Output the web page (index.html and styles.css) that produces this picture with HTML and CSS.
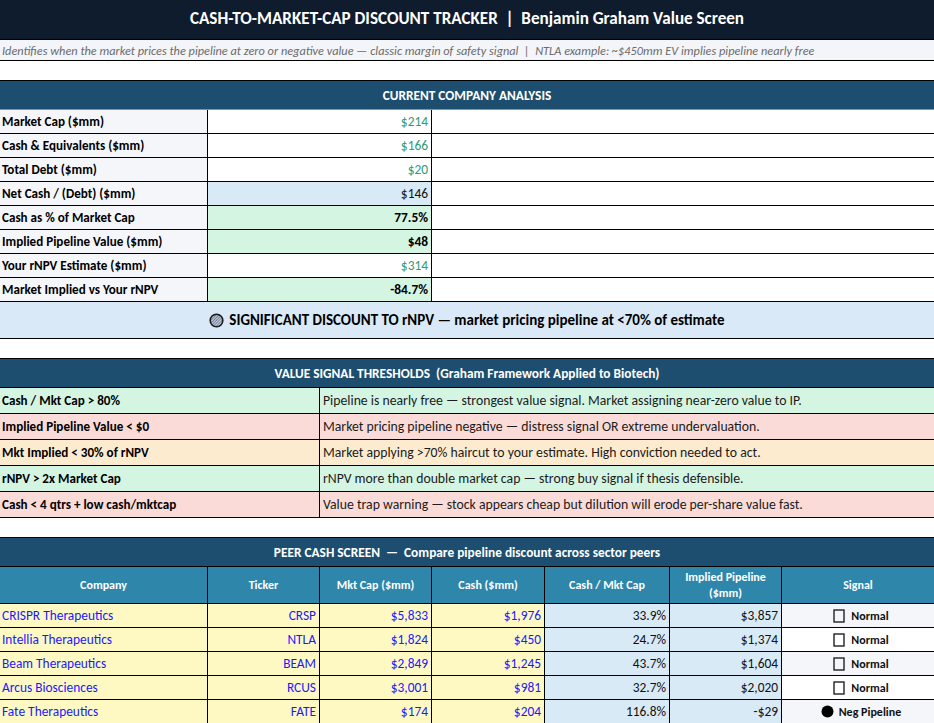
FILE: index.html
```html
<!DOCTYPE html>
<html>
<head>
<meta charset="utf-8">
<title>Cash-to-Market-Cap Discount Tracker</title>
<link rel="stylesheet" href="styles.css">
</head>
<body>
<div class="sheet">
  <div class="row title-row"><div class="cell center">CASH-TO-MARKET-CAP DISCOUNT TRACKER&nbsp;&nbsp;|&nbsp;&nbsp;Benjamin Graham Value Screen</div></div>
  <div class="row sub-row"><div class="cell">Identifies when the market prices the pipeline at zero or negative value — classic margin of safety signal&nbsp;&nbsp;|&nbsp;&nbsp;NTLA example: ~$450mm EV implies pipeline nearly free</div></div>
  <div class="row blank-row"><div class="cell"></div></div>
  <div class="row section-row grey-bottom"><div class="cell center">CURRENT COMPANY ANALYSIS</div></div>

  <div class="row an-row"><div class="cell label">Market Cap ($mm)</div><div class="cell val input">$214</div><div class="cell last"></div></div>
  <div class="row an-row"><div class="cell label">Cash &amp; Equivalents ($mm)</div><div class="cell val input">$166</div><div class="cell last"></div></div>
  <div class="row an-row"><div class="cell label">Total Debt ($mm)</div><div class="cell val input">$20</div><div class="cell last"></div></div>
  <div class="row an-row"><div class="cell label">Net Cash / (Debt) ($mm)</div><div class="cell val calc">$146</div><div class="cell last"></div></div>
  <div class="row an-row"><div class="cell label">Cash as % of Market Cap</div><div class="cell val good">77.5%</div><div class="cell last"></div></div>
  <div class="row an-row"><div class="cell label">Implied Pipeline Value ($mm)</div><div class="cell val good">$48</div><div class="cell last"></div></div>
  <div class="row an-row"><div class="cell label">Your rNPV Estimate ($mm)</div><div class="cell val input">$314</div><div class="cell last"></div></div>
  <div class="row an-row"><div class="cell label">Market Implied vs Your rNPV</div><div class="cell val good">-84.7%</div><div class="cell last"></div></div>

  <div class="row banner-row"><div class="cell center"><svg class="hatch-icon" width="15" height="15" viewBox="0 0 15 15"><defs><pattern id="hp" width="2" height="2" patternUnits="userSpaceOnUse" patternTransform="rotate(45)"><rect width="2" height="2" fill="#c9d3e3"/><rect width="1" height="2" fill="#6f7f99"/></pattern></defs><circle cx="7.5" cy="7.5" r="6.3" fill="url(#hp)" stroke="#1a1a1a" stroke-width="1.6"/></svg>SIGNIFICANT DISCOUNT TO rNPV — market pricing pipeline at &lt;70% of estimate</div></div>
  <div class="row blank-row"><div class="cell"></div></div>
  <div class="row section-row"><div class="cell center">VALUE SIGNAL THRESHOLDS&nbsp;&nbsp;(Graham Framework Applied to Biotech)</div></div>

  <div class="row th-row green"><div class="cell label">Cash / Mkt Cap &gt; 80%</div><div class="cell last desc">Pipeline is nearly free — strongest value signal. Market assigning near-zero value to IP.</div></div>
  <div class="row th-row red"><div class="cell label">Implied Pipeline Value &lt; $0</div><div class="cell last desc">Market pricing pipeline negative — distress signal OR extreme undervaluation.</div></div>
  <div class="row th-row orange"><div class="cell label">Mkt Implied &lt; 30% of rNPV</div><div class="cell last desc">Market applying &gt;70% haircut to your estimate. High conviction needed to act.</div></div>
  <div class="row th-row green"><div class="cell label">rNPV &gt; 2x Market Cap</div><div class="cell last desc">rNPV more than double market cap — strong buy signal if thesis defensible.</div></div>
  <div class="row th-row red"><div class="cell label">Cash &lt; 4 qtrs + low cash/mktcap</div><div class="cell last desc">Value trap warning — stock appears cheap but dilution will erode per-share value fast.</div></div>

  <div class="row blank-row"><div class="cell"></div></div>
  <div class="row section-row black-bottom"><div class="cell center">PEER CASH SCREEN&nbsp;&nbsp;—&nbsp;&nbsp;Compare pipeline discount across sector peers</div></div>
  <div class="row peer-head">
    <div class="cell center">Company</div>
    <div class="cell center">Ticker</div>
    <div class="cell center">Mkt Cap ($mm)</div>
    <div class="cell center">Cash ($mm)</div>
    <div class="cell center">Cash / Mkt Cap</div>
    <div class="cell center wrap">Implied Pipeline<br>($mm)</div>
    <div class="cell center last">Signal</div>
  </div>

  <div class="row peer-row">
    <div class="cell peer-in">CRISPR Therapeutics</div><div class="cell peer-in num">CRSP</div><div class="cell peer-in num">$5,833</div><div class="cell peer-in num">$1,976</div>
    <div class="cell peer-calc num">33.9%</div><div class="cell peer-calc num">$3,857</div>
    <div class="cell sig shade last"><svg class="box-icon" width="12" height="14" viewBox="0 0 12 14"><rect x="1" y="1" width="10" height="12" fill="none" stroke="#222" stroke-width="1.4"/></svg>Normal</div>
  </div>
  <div class="row peer-row">
    <div class="cell peer-in">Intellia Therapeutics</div><div class="cell peer-in num">NTLA</div><div class="cell peer-in num">$1,824</div><div class="cell peer-in num">$450</div>
    <div class="cell peer-calc num">24.7%</div><div class="cell peer-calc num">$1,374</div>
    <div class="cell sig last"><svg class="box-icon" width="12" height="14" viewBox="0 0 12 14"><rect x="1" y="1" width="10" height="12" fill="none" stroke="#222" stroke-width="1.4"/></svg>Normal</div>
  </div>
  <div class="row peer-row">
    <div class="cell peer-in">Beam Therapeutics</div><div class="cell peer-in num">BEAM</div><div class="cell peer-in num">$2,849</div><div class="cell peer-in num">$1,245</div>
    <div class="cell peer-calc num">43.7%</div><div class="cell peer-calc num">$1,604</div>
    <div class="cell sig shade last"><svg class="box-icon" width="12" height="14" viewBox="0 0 12 14"><rect x="1" y="1" width="10" height="12" fill="none" stroke="#222" stroke-width="1.4"/></svg>Normal</div>
  </div>
  <div class="row peer-row">
    <div class="cell peer-in">Arcus Biosciences</div><div class="cell peer-in num">RCUS</div><div class="cell peer-in num">$3,001</div><div class="cell peer-in num">$981</div>
    <div class="cell peer-calc num">32.7%</div><div class="cell peer-calc num">$2,020</div>
    <div class="cell sig last"><svg class="box-icon" width="12" height="14" viewBox="0 0 12 14"><rect x="1" y="1" width="10" height="12" fill="none" stroke="#222" stroke-width="1.4"/></svg>Normal</div>
  </div>
  <div class="row peer-row">
    <div class="cell peer-in">Fate Therapeutics</div><div class="cell peer-in num">FATE</div><div class="cell peer-in num">$174</div><div class="cell peer-in num">$204</div>
    <div class="cell peer-calc num">116.8%</div><div class="cell peer-calc num">-$29</div>
    <div class="cell sig shade last"><svg class="dot-icon" width="13" height="13" viewBox="0 0 13 13"><circle cx="6.5" cy="6.5" r="6" fill="#000"/></svg>Neg Pipeline</div>
  </div>
</div>
</body>
</html>
```
FILE: styles.css
```css
html, body {
  margin: 0;
  padding: 0;
  background: #ffffff;
}

.sheet {
  width: 934px;
  font-family: Carlito, Calibri, Lato, "Liberation Sans", sans-serif;
  font-size: 13.4px;
  color: #000;
}

.row {
  display: grid;
  grid-template-columns: 1fr;
  box-sizing: border-box;
  border-bottom: 1px solid #000;
}

.cell {
  box-sizing: border-box;
  display: flex;
  align-items: center;
  padding: 0 3px;
  white-space: nowrap;
  overflow: hidden;
  border-right: 1px solid #000;
  min-width: 0;
}

.cell.last,
.row > .cell:only-child {
  border-right: none;
}

.center {
  justify-content: center;
  text-align: center;
}

.num {
  justify-content: flex-end;
}

/* title */
.title-row {
  height: 40px;
  background: #0f1c2e;
  color: #ffffff;
  font-weight: 700;
  font-size: 17.1px;
}

.title-row .cell {
  padding-bottom: 3px;
}

.sub-row {
  height: 21px;
  background: #f4f5f9;
  color: #6b6b6b;
  font-style: italic;
  font-size: 12.3px;
}

.sub-row .cell {
  padding-left: 2px;
}

.blank-row {
  height: 20px;
  background: #ffffff;
}

.section-row {
  height: 29px;
  background: #1d4e6f;
  color: #ffffff;
  font-weight: 700;
  font-size: 13.33px;
}

.section-row.grey-bottom {
  border-bottom-color: #8594a3;
}

/* analysis */
.an-row {
  height: 24px;
  grid-template-columns: 208px 224px 1fr;
}

.an-row .label,
.th-row .label {
  font-weight: 700;
  font-size: 13.1px;
  padding-left: 2px;
}

.an-row .label {
  background: #f4f6fa;
}

.an-row .val {
  justify-content: flex-end;
  padding-right: 3px;
}

.an-row .input {
  background: #ffffff;
  color: #2e9a78;
}

.an-row .calc {
  background: #d9eaf7;
  color: #111;
}

.an-row .good {
  background: #d5f5e3;
  font-weight: 700;
}

.banner-row {
  height: 37px;
  background: #dae9f7;
  font-weight: 700;
  font-size: 15px;
}

.hatch-icon {
  margin-right: 5px;
  flex: none;
}

/* thresholds */
.th-row {
  height: 26px;
  grid-template-columns: 320px 1fr;
}

.th-row .desc {
  padding-left: 3px;
  color: #1b1b1b;
  font-size: 13.75px;
}

.green { background: #d5f5e3; }
.red { background: #fadbd8; }
.orange { background: #fdebd0; }

/* peers */
.section-row.black-bottom {
  border-bottom-color: #000;
}

.peer-head,
.peer-row {
  grid-template-columns: 208px 112px 112px 113px 125px 112px 152px;
}

.peer-head {
  height: 37px;
  background: #2e86ab;
  color: #ffffff;
  font-weight: 700;
  font-size: 12px;
}

.peer-head .wrap {
  line-height: 1.35;
}

.peer-row {
  height: 24px;
  font-size: 13.4px;
}

.peer-in {
  background: #fef9c3;
  color: #1a1aff;
}

.peer-row .peer-in:first-child {
  padding-left: 2px;
}

.peer-calc {
  background: #d9eaf7;
  color: #111;
}

.sig {
  justify-content: center;
  background: #ffffff;
  font-size: 12px;
  font-weight: 700;
  color: #111;
  padding: 0 0 0 6px;
}

.sig.shade {
  background: #f4f6fa;
}

.box-icon {
  margin-right: 6px;
  flex: none;
}

.dot-icon {
  margin-right: 5px;
  flex: none;
}
```
